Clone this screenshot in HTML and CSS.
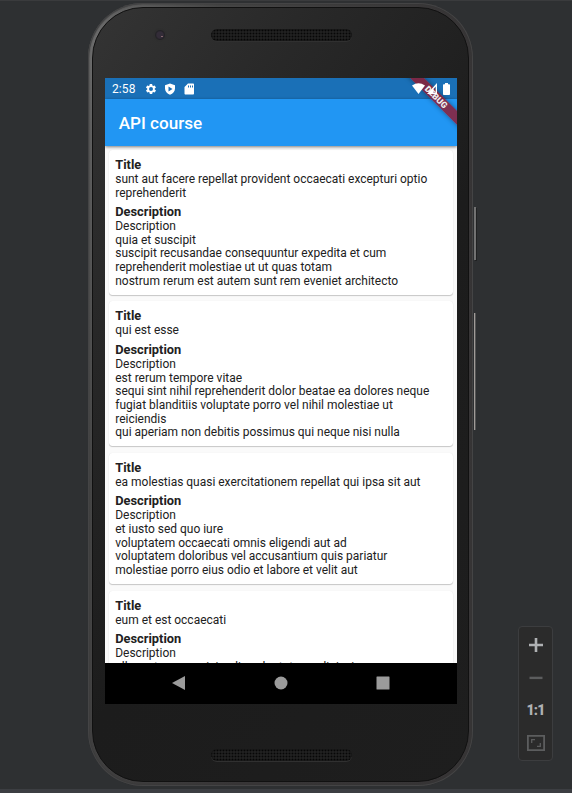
FILE: index.html
```html
<!DOCTYPE html>
<html lang="en">
<head>
<meta charset="utf-8">
<title>API course</title>
<link rel="stylesheet" href="styles.css">
</head>
<body>
<div class="workspace">
  <div class="phone">
    <span class="side-button power"></span>
    <span class="side-button volume"></span>
    <div class="face">
      <div class="bezel top"><span class="camera"></span><span class="speaker"></span></div>
      <div class="screen">
        <header class="status">
          <span class="clock">2:58</span>
          <svg class="gear" viewBox="0 0 24 24"><path fill-rule="evenodd" d="M19.4 13a7.5 7.5 0 0 0 0-2l2.1-1.6a.5.5 0 0 0 .1-.7l-2-3.4a.5.5 0 0 0-.6-.2l-2.5 1a7 7 0 0 0-1.7-1l-.4-2.6a.5.5 0 0 0-.5-.5h-4a.5.5 0 0 0-.5.5L9 5.1a7 7 0 0 0-1.700 1l-2.500-1a.5.5 0 0 0-.6.2l-2 3.400a.5.5 0 0 0 .1.7L4.500 11a7.500 7.500 0 0 0 0 2l-2.100 1.600a.5.5 0 0 0-.1.7l2 3.400c.1.2.4.3.6.2l2.500-1a7 7 0 0 0 1.700 1l.4 2.600c0 .3.2.5.5.5h4c.3 0 .5-.2.5-.5l.4-2.600a7 7 0 0 0 1.700-1l2.500 1c.2.1.5 0 .6-.2l2-3.400a.5.5 0 0 0-.1-.7zM12 16a4 4 0 1 1 0-8 4 4 0 0 1 0 8z"/></svg>
          <svg class="shield" viewBox="0 0 24 24"><path fill-rule="evenodd" d="M12 1 2 4.500V11c0 5.600 4 10.700 10 12.500 6-1.800 10-6.900 10-12.500V4.500zM9 7l8 5-8 5z"/></svg>
          <svg class="card-icon" viewBox="0 0 20 24"><path fill-rule="evenodd" d="M18 1H8L1 8v13c0 1.100.9 2 2 2h15c1.100 0 2-.9 2-2V3c0-1.100-.9-2-2-2zM8 5h2v4H8zm4 0h2v4h-2zm4 0h2v4h-2z"/></svg>
          <span class="grow"></span>
          <svg class="wifi" viewBox="0 0 13 11"><path d="M0 2.500Q6.500-2 13 2.500L6.500 11z"/></svg>
          <svg class="signal" viewBox="0 0 10 11"><path fill-rule="evenodd" d="M10 0v11H0zM8.700 3.500v6.200H6.500V5.900z"/></svg>
          <svg class="battery" viewBox="0 0 7 12"><path d="M2 0h3v1.200h1.200q.8 0 .8.8v9q0 1-.8 1H.8Q0 12 0 11V2q0-.8.8-.8H2z"/></svg>
        </header>
        <h1 class="appbar">API course</h1>
        <main class="posts">
          <article class="post">
            <h2>Title</h2>
            <p>sunt aut facere repellat provident occaecati excepturi optio<br>reprehenderit</p>
            <h2 class="second">Description</h2>
            <p>Description<br>quia et suscipit<br>suscipit recusandae consequuntur expedita et cum<br>reprehenderit molestiae ut ut quas totam<br>nostrum rerum est autem sunt rem eveniet architecto</p>
          </article>
          <article class="post">
            <h2>Title</h2>
            <p>qui est esse</p>
            <h2 class="second">Description</h2>
            <p>Description<br>est rerum tempore vitae<br>sequi sint nihil reprehenderit dolor beatae ea dolores neque<br>fugiat blanditiis voluptate porro vel nihil molestiae ut<br>reiciendis<br>qui aperiam non debitis possimus qui neque nisi nulla</p>
          </article>
          <article class="post">
            <h2>Title</h2>
            <p>ea molestias quasi exercitationem repellat qui ipsa sit aut</p>
            <h2 class="second">Description</h2>
            <p>Description<br>et iusto sed quo iure<br>voluptatem occaecati omnis eligendi aut ad<br>voluptatem doloribus vel accusantium quis pariatur<br>molestiae porro eius odio et labore et velit aut</p>
          </article>
          <article class="post">
            <h2>Title</h2>
            <p>eum et est occaecati</p>
            <h2 class="second">Description</h2>
            <p>Description<br>ullam et saepe reiciendis voluptatem adipisci</p>
          </article>
        </main>
        <nav class="nav">
          <svg viewBox="0 0 14 14"><path d="M13 0v14L0 7z"/></svg>
          <svg viewBox="0 0 14 14"><circle cx="7" cy="7" r="6.500"/></svg>
          <svg viewBox="0 0 14 14"><rect x=".5" y=".5" width="13" height="13" rx=".5"/></svg>
        </nav>
        <div class="debug">DEBUG</div>
      </div>
      <div class="bezel bottom"><span class="speaker"></span></div>
    </div>
  </div>
  <div class="zoom-tools">
    <svg class="bright" viewBox="0 0 14 14"><path d="M5.700 0h2.600v5.700H14v2.600H8.300V14H5.700V8.300H0V5.700h5.700z"/></svg>
    <svg viewBox="0 0 14 14"><path d="M.5 5.700h13v2.400H.5z"/></svg>
    <span class="ratio">1:1</span>
    <svg class="fit" viewBox="0 0 18 16"><path fill="none" stroke="currentColor" stroke-width="1.800" d="M.9.9h16.200v14.200H.9z"/><path fill="none" stroke="currentColor" stroke-width="1.300" d="M4.700 8V4.700H8M10 11.300h3.300V8"/></svg>
  </div>
</div>
</body>
</html>
```
FILE: styles.css
```css
* { box-sizing: border-box; }
body { margin: 0; background: #2e3032; font-family: Roboto, sans-serif; }
svg { display: block; fill: currentColor; }
.workspace {
  position: relative;
  width: 572px;
  height: 793px;
  padding: 3px 0 0 88px;
  overflow: hidden;
  border-top: 1px solid #3a3b3d;
  background: linear-gradient(#2e3032 788px, #3c3e42 788px);
}
.phone {
  position: relative;
  width: 385px;
  height: 783px;
  margin-top: -1px;
  padding: 4px;
  border-radius: 55px;
  background: linear-gradient(105deg, #777 0, #606060 6%, #464646 22%, #383637 60%, #373536 100%);
  box-shadow: inset 0 0 0 1px #444445, inset 0 0 2px 1px #333;
}
.face {
  height: 100%;
  padding: 0 11px 0 12px;
  border: 1px solid #111;
  border-radius: 51px;
  background: linear-gradient(125deg, #343434 0, #282828 25%, #1c1c1c 55%, #1e1e1e 100%);
}
.bezel { position: relative; display: flex; justify-content: center; }
.top { height: 70px; padding-top: 21px; }
.bottom { padding-top: 45px; }
.speaker {
  width: 141px;
  height: 12px;
  border-radius: 6px;
  background: radial-gradient(circle, #070707 0.8px, transparent 1.1px) 2px 0 / 3px 3px, #202020;
  box-shadow: inset 0 0 2px #090909, 0 1px 0 #303030;
}
.camera {
  position: absolute;
  left: 48px;
  top: 20px;
  width: 14px;
  height: 14px;
  border-radius: 50%;
  background: radial-gradient(circle, #332c38 0 3px, #232226 4.500px, #2e2e2e 5.500px);
}
.camera::after {
  content: "";
  position: absolute;
  left: 8px;
  top: 8px;
  width: 2px;
  height: 1px;
  background: #86686d;
}
.side-button { position: absolute; background: #727272; }
.power { left: 386px; top: 204px; width: 2px; height: 53px; box-shadow: 1px 1px #202122; }
.volume { left: 386px; top: 310px; width: 1px; height: 117px; background: #a19c99; box-shadow: 1px 0 #555; }
.screen {
  position: relative;
  display: flex;
  flex-direction: column;
  width: 352px;
  height: 626px;
  overflow: hidden;
  background: #fafafa;
}
.status {
  display: flex;
  flex: none;
  align-items: center;
  height: 20.500px;
  padding: 1px 7px 0;
  background: #1a70b7;
  color: #fff;
}
.clock { width: 33px; font-size: 12px; line-height: 20px; letter-spacing: .1px; }
.gear, .shield { width: 12px; height: 12px; }
.shield { margin-left: 7px; }
.card-icon { width: 10px; height: 12px; margin-left: 8px; }
.grow { flex: 1; }
.wifi, .signal, .battery { position: relative; z-index: 3; }
.wifi { width: 13px; height: 11px; margin-right: 2px; }
.signal { width: 10px; height: 11px; margin-right: 6px; }
.battery { width: 7px; height: 12px; }
.appbar {
  position: relative;
  z-index: 1;
  flex: none;
  height: 47.600px;
  margin: 0;
  padding-left: 13.700px;
  background: #2196f3;
  box-shadow: 0 1px 3px rgba(0, 0, 0, .5);
  color: #fff;
  font-size: 17.100px;
  font-weight: 500;
  line-height: 48px;
}
.posts { flex: 1; min-height: 0; overflow: hidden; }
.post {
  margin: 3.900px 3.800px 6.840px;
  padding: 6.840px 6.440px;
  border-radius: 3.400px;
  background: #fff;
  box-shadow: 0 1px 1px rgba(0, 0, 0, .2), 0 0 1px rgba(0, 0, 0, .1);
  color: #212121;
}
.post + .post { margin-top: 0; }
.post h2 { margin: 0; font-size: 12.830px; font-weight: 700; line-height: 15.400px; }
.post .second { margin-top: 3.600px; }
.post p { margin: 0; padding-top: .7px; font-size: 11.970px; line-height: 13.700px; white-space: nowrap; }
.post .second + p { margin-bottom: -.7px; }
.nav {
  display: flex;
  flex: none;
  align-items: center;
  justify-content: space-between;
  height: 41px;
  padding: 0 67px 1px 67px;
  background: #000;
  color: #9b9b9b;
}
.nav svg { width: 14px; height: 14px; }
.debug {
  position: absolute;
  z-index: 2;
  top: 13px;
  right: -23px;
  width: 90px;
  height: 10.300px;
  transform: rotate(45deg);
  background: rgba(145, 25, 45, .82);
  box-shadow: 0 0 5px rgba(0, 0, 0, .4);
  color: #eee;
  font-size: 8.700px;
  font-weight: 900;
  line-height: 10.500px;
  text-align: center;
  text-indent: 3px;
}
.zoom-tools {
  position: absolute;
  left: 518px;
  top: 625px;
  display: flex;
  flex-direction: column;
  align-items: center;
  width: 35px;
  height: 135px;
  padding-top: 11px;
  border: 1px solid #3c3d3f;
  border-radius: 4px;
  background: #2b2b2b;
  color: #5c5d5e;
}
.zoom-tools svg { width: 14px; height: 14px; margin-bottom: 19px; }
.zoom-tools .bright { color: #afb1b3; }
.zoom-tools .ratio {
  height: 16px;
  margin-top: -2px;
  color: #afb1b3;
  font-size: 14px;
  font-weight: 900;
  letter-spacing: -.8px;
  line-height: 16px;
}
.zoom-tools .fit { width: 18px; height: 16px; margin: 17px 0 0; }
```
